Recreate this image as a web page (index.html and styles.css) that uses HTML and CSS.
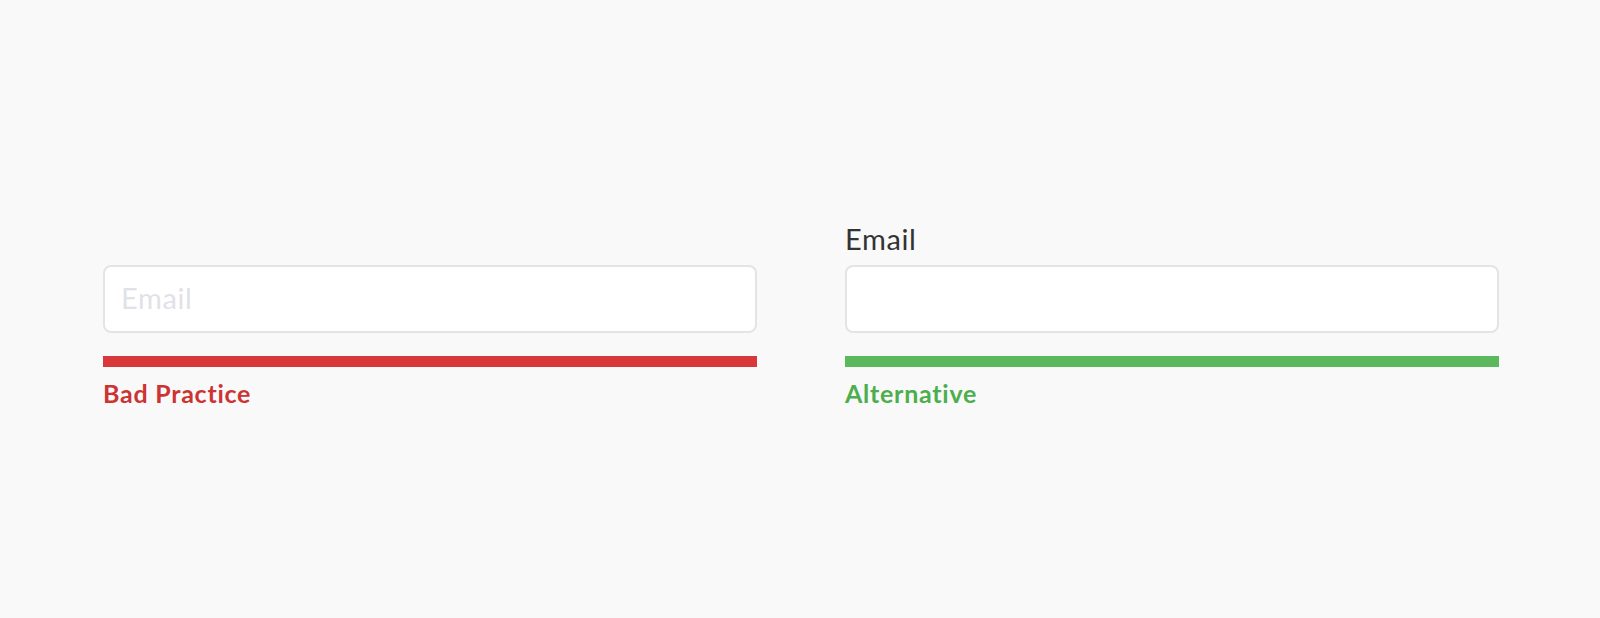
FILE: index.html
```html
<!DOCTYPE html>
<html lang="en">
<head>
<meta charset="utf-8">
<title>Email field comparison</title>
<link rel="stylesheet" href="styles.css">
</head>
<body>
<main class="compare">
  <section class="example">
    <div class="label label-empty"></div>
    <div class="field"><span class="placeholder">Email</span></div>
    <div class="bar bar-bad"></div>
    <div class="caption caption-bad">Bad Practice</div>
  </section>
  <section class="example">
    <div class="label">Email</div>
    <div class="field"></div>
    <div class="bar bar-good"></div>
    <div class="caption caption-good">Alternative</div>
  </section>
</main>
</body>
</html>
```
FILE: styles.css
```css
html, body {
  margin: 0;
  padding: 0;
  background: #f9f9f9;
  font-family: Lato, "Open Sans", sans-serif;
}

.compare {
  display: grid;
  grid-template-columns: 654px 654px;
  column-gap: 88px;
  padding: 221px 101px 0 103px;
}

.example {
  display: flex;
  flex-direction: column;
}

.label {
  font-size: 29px;
  line-height: 35px;
  height: 35px;
  letter-spacing: 0.6px;
  color: #333333;
  margin-bottom: 9px;
}

.field {
  box-sizing: border-box;
  height: 68px;
  border: 2px solid #e3e4e8;
  border-radius: 8px;
  background: #ffffff;
  padding: 0 16px 3px;
  display: flex;
  align-items: center;
  font-size: 29px;
  line-height: 35px;
  letter-spacing: 0.6px;
}

.placeholder {
  color: #e1e2e7;
}

.bar {
  height: 11px;
  margin-top: 23px;
}

.bar-bad { background: #d9383a; }
.bar-good { background: #5cb85c; }

.caption {
  font-size: 25px;
  font-weight: 700;
  line-height: 30px;
  letter-spacing: 0.75px;
  margin-top: 11px;
}

.caption-bad { color: #cc3333; }
.caption-good { color: #4cae4c; }
```
